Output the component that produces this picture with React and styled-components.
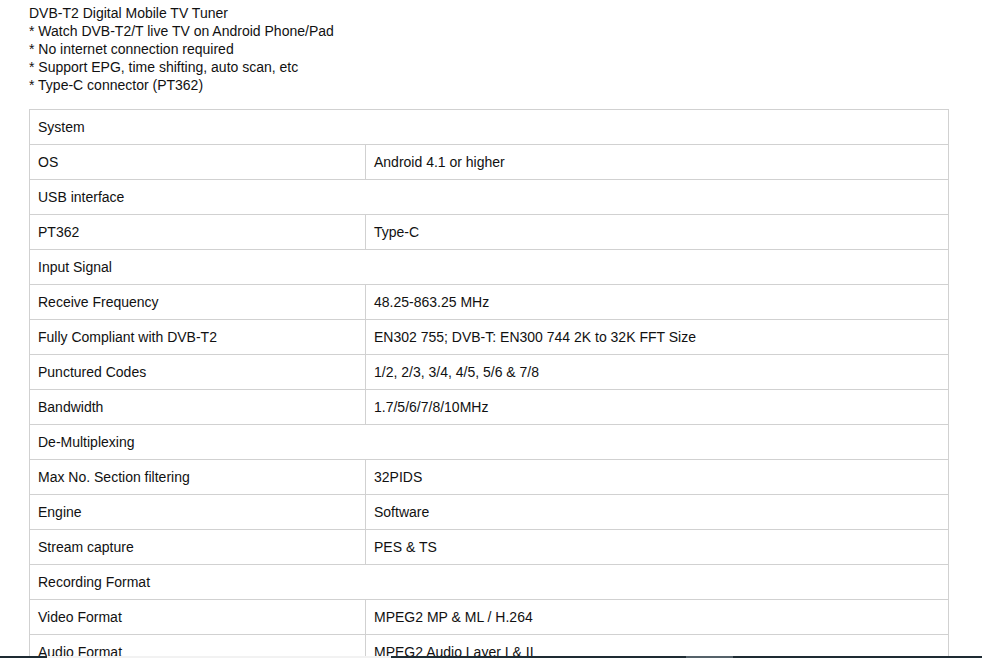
import styled, { createGlobalStyle } from "styled-components";

const Global = createGlobalStyle`
  html, body {
    margin: 0;
    padding: 0;
    background: #fff;
    overflow: hidden;
  }
  body {
    font-family: "Liberation Sans", Arial, sans-serif;
    font-size: 14px;
    color: #111;
  }
`;

const Page = styled.div`
  padding: 4px 34px 0 29px;
`;

const Intro = styled.div`
  line-height: 18px;
  margin-bottom: 15px;
`;

const Line = styled.div``;

const Table = styled.table`
  width: 920px;
  border-collapse: collapse;
  table-layout: fixed;
`;

const Cell = styled.td`
  border: 1px solid #d1d1d1;
  padding: 8px 8px;
  line-height: 18px;
  vertical-align: middle;
`;

const BottomBar = styled.div`
  position: fixed;
  left: 0;
  right: 0;
  bottom: 0;
  height: 2px;
  background: #1e2b33;
  display: flex;
`;

const BarPart = styled.div`
  margin-left: ${(p) => p.$left}px;
  width: ${(p) => p.$width}px;
  background: ${(p) => p.$color};
`;

const intro = [
  "DVB-T2 Digital Mobile TV Tuner",
  "* Watch DVB-T2/T live TV on Android Phone/Pad",
  "* No internet connection required",
  "* Support EPG, time shifting, auto scan, etc",
  "* Type-C connector (PT362)",
];

const rows = [
  ["System"],
  ["OS", "Android 4.1 or higher"],
  ["USB interface"],
  ["PT362", "Type-C"],
  ["Input Signal"],
  ["Receive Frequency", "48.25-863.25 MHz"],
  ["Fully Compliant with DVB-T2", "EN302 755; DVB-T: EN300 744 2K to 32K FFT Size"],
  ["Punctured Codes", "1/2, 2/3, 3/4, 4/5, 5/6 & 7/8"],
  ["Bandwidth", "1.7/5/6/7/8/10MHz"],
  ["De-Multiplexing"],
  ["Max No. Section filtering", "32PIDS"],
  ["Engine", "Software"],
  ["Stream capture", "PES & TS"],
  ["Recording Format"],
  ["Video Format", "MPEG2 MP & ML / H.264"],
  ["Audio Format", "MPEG2 Audio Layer I & II"],
];

export default function App() {
  return (
    <>
      <Global />
      <Page>
        <Intro>
          {intro.map((t) => (
            <Line key={t}>{t}</Line>
          ))}
        </Intro>
        <Table>
          <colgroup>
            <col style={{ width: "336px" }} />
            <col />
          </colgroup>
          <tbody>
            {rows.map((r) =>
              r.length === 1 ? (
                <tr key={r[0]}>
                  <Cell colSpan={2}>{r[0]}</Cell>
                </tr>
              ) : (
                <tr key={r[0]}>
                  <Cell>{r[0]}</Cell>
                  <Cell>{r[1]}</Cell>
                </tr>
              )
            )}
          </tbody>
        </Table>
      </Page>
      <BottomBar>
        <BarPart $left={47} $width={344} $color="#f2f2f2" />
        <BarPart $left={295} $width={47} $color="#55626a" />
      </BottomBar>
    </>
  );
}
